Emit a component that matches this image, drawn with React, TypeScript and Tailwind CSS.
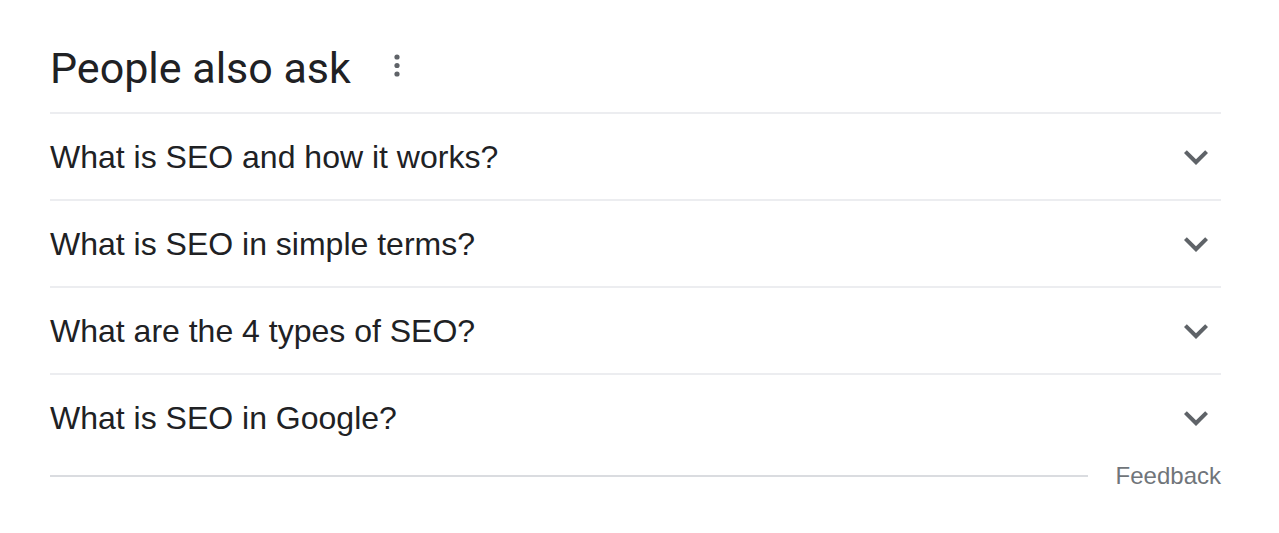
const QUESTIONS = [
  'What is SEO and how it works?',
  'What is SEO in simple terms?',
  'What are the 4 types of SEO?',
  'What is SEO in Google?',
];

function MoreVert() {
  return (
    <svg width="20" height="30" viewBox="0 0 20 30" className="block">
      <circle cx="10" cy="6" r="2.6" fill="#5f6368" />
      <circle cx="10" cy="14.5" r="2.6" fill="#5f6368" />
      <circle cx="10" cy="23" r="2.6" fill="#5f6368" />
    </svg>
  );
}

function Chevron() {
  return (
    <svg width="48" height="48" viewBox="0 0 24 24" className="block">
      <path d="M16.59 8.59L12 13.17 7.41 8.59 6 10l6 6 6-6z" fill="#5f6368" />
    </svg>
  );
}

export default function App() {
  return (
    <div className="w-[1279px] h-[533px] bg-white pl-[50px]">
      <div className="w-[1171px]">
        {/* Header */}
        <div className="h-[112px] flex items-start pt-[42px]">
          <h2
            className="text-[43px] leading-[52px] text-[#202124]"
            style={{ fontFamily: 'Roboto, "Noto Sans", sans-serif' }}
          >
            People also ask
          </h2>
          <div className="ml-[36px] mt-[9px]">
            <MoreVert />
          </div>
        </div>

        {/* Questions */}
        <div style={{ fontFamily: '"Liberation Sans", Arial, sans-serif' }}>
          {QUESTIONS.map((q) => (
            <div
              key={q}
              className="h-[87px] border-t-2 border-[#ecedf0] flex items-center justify-between"
            >
              <span className="text-[32px] leading-[40px] text-[#202124]">{q}</span>
              <div className="mr-[1px]">
                <Chevron />
              </div>
            </div>
          ))}
        </div>

        {/* Footer */}
        <div
          className="h-[31px] flex items-center"
          style={{ fontFamily: '"Liberation Sans", Arial, sans-serif' }}
        >
          <div className="flex-1 h-[2px] bg-[#dadce0]" />
          <span className="ml-[28px] text-[24px] leading-[30px] text-[#70757a]">Feedback</span>
        </div>
      </div>
    </div>
  );
}
